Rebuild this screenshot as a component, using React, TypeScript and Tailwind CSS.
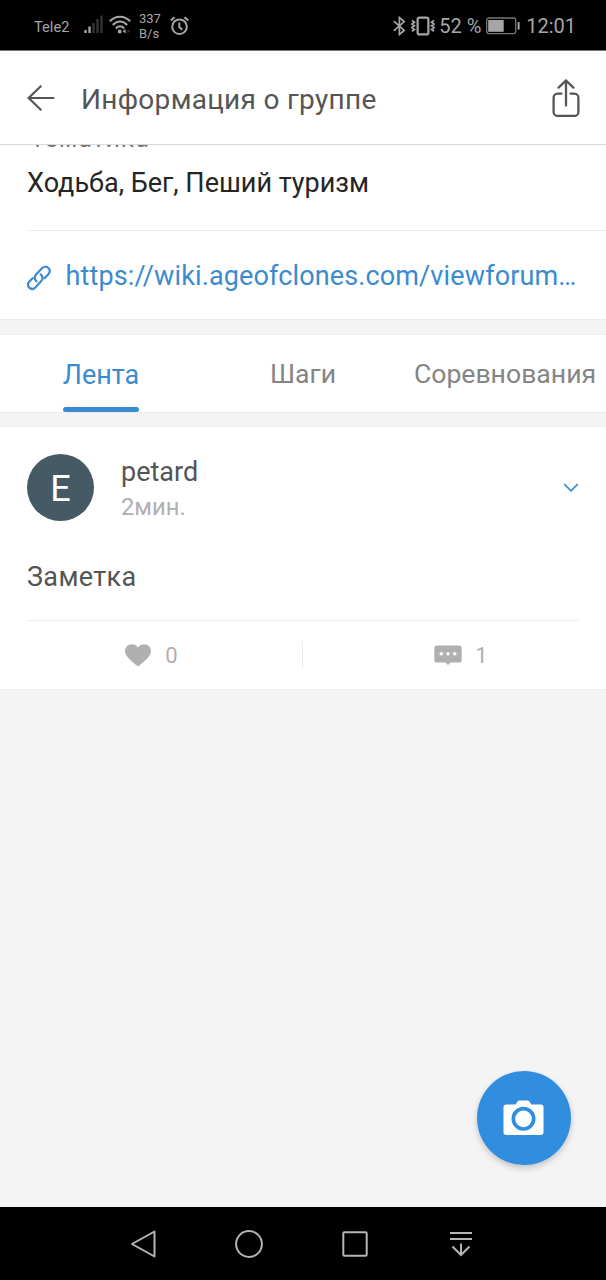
import type { ReactNode } from 'react';

const tabs = [
  { label: 'Лента', active: true },
  { label: 'Шаги', active: false },
  { label: 'Соревнования', active: false },
];

// Status bar icons
const SignalIcon = () => (
  <svg width="20" height="20" viewBox="0 0 20 20">
    <rect x="0.3" y="15" width="2.4" height="3" fill="#a6a6a6" />
    <rect x="4.3" y="11.5" width="2.4" height="6.5" fill="#a6a6a6" />
    <rect x="8.3" y="8" width="2.4" height="10" fill="#343434" />
    <rect x="12.3" y="4" width="2.4" height="14" fill="#343434" />
    <rect x="16.3" y="0.5" width="2.4" height="17.5" fill="#343434" />
  </svg>
);

const WifiIcon = () => (
  <svg width="22" height="20" viewBox="0 0 22 20" fill="none" stroke="#a6a6a6" strokeWidth="2">
    <path d="M0.8 6.2C6.5 0.1 15.5 0.1 21.2 6.2" />
    <path d="M3.8 10C8.2 5.3 13.8 5.3 18.2 10" />
    <path d="M6.8 13.5C9.5 10.6 12.5 10.6 15.2 13.5" />
    <path d="M9 14.8h3.4v3.4H9z" fill="#a6a6a6" stroke="none" />
    <path d="M16.6 14v4.4l-3-2.2z" fill="#a6a6a6" stroke="none" />
    <path d="M18.4 14v4.4l2.6-2.2z" fill="#343434" stroke="none" />
  </svg>
);

const AlarmIcon = () => (
  <svg width="19" height="20" viewBox="0 0 19 20" fill="none" stroke="#a6a6a6" strokeWidth="2">
    <circle cx="9.5" cy="10.7" r="7.3" />
    <path d="M9.3 6.4v4.6l3 2.8M0.8 4.6L4.6 1.2M18.2 4.6L14.4 1.2" />
  </svg>
);

const BluetoothIcon = () => (
  <svg width="13" height="20" viewBox="0 0 13 20" fill="none" stroke="#a6a6a6" strokeWidth="1.7">
    <path d="M0.8 5.2L11.2 14.4L6.4 18.4V1.6L11.2 5.6L0.8 14.8" />
  </svg>
);

const VibrateIcon = () => (
  <svg width="24" height="20" viewBox="0 0 24 20" fill="none" stroke="#a6a6a6">
    <rect x="6.6" y="1.6" width="10.8" height="16.8" rx="2" strokeWidth="2.2" />
    <path d="M1 4.4l2.4 1.8L1 8l2.4 1.8L1 11.6l2.4 1.8L1 15.2M23 4.4l-2.4 1.8L23 8l-2.4 1.8L23 11.6l-2.4 1.8L23 15.2" strokeWidth="1.8" />
  </svg>
);

const BatteryIcon = () => (
  <svg width="34" height="18" viewBox="0 0 34 18">
    <rect x="0.7" y="1" width="29" height="15.6" rx="2" fill="none" stroke="#777" strokeWidth="1.3" />
    <rect x="2.2" y="3" width="15.5" height="11.8" fill="#a6a6a6" />
    <rect x="31.6" y="5" width="2" height="7.6" fill="#a6a6a6" />
  </svg>
);

// Page icons
const BackIcon = () => (
  <svg width="28" height="28" viewBox="0 0 28 28" fill="none" stroke="#555" strokeWidth="2.2">
    <path d="M27.3 14H1.6M14.3 1.8L1.6 14l12.7 12.2" />
  </svg>
);

const ShareIcon = () => (
  <svg width="28" height="38" viewBox="0 0 28 38" fill="none" stroke="#555" strokeWidth="2.3" strokeLinecap="round">
    <path d="M9.5 14.6H5.6a4 4 0 0 0-4 4v14.3a4 4 0 0 0 4 4h16.8a4 4 0 0 0 4-4V18.6a4 4 0 0 0-4-4H18.5" />
    <path d="M14 26.5V1.6M6.6 8.6L14 1.5l7.4 7.1" />
  </svg>
);

const LinkIcon = () => (
  <svg width="24" height="26" viewBox="0 0 24 26" fill="none" stroke="#3b8bd0" strokeWidth="2.2" strokeLinecap="round">
    <path d="M9.5 16.3C7.3 14 7.4 11.3 9.3 9.3L15 3.3C17 1.3 19.6 1.2 21.4 3C23.2 4.8 23.1 7.3 21.2 9.4L17.5 13.2" />
    <path d="M13.7 9.3C15.9 11.5 16 14.3 14.1 16.3L8.6 22.2C6.6 24.2 4.1 24.4 2.3 22.6C0.6 20.9 0.7 18.3 2.6 16.3L5.6 13.2" />
  </svg>
);

const ChevronIcon = () => (
  <svg width="16" height="10" viewBox="0 0 16 10" fill="none" stroke="#3b8bd0" strokeWidth="1.7">
    <path d="M1.2 1.2L8 7.8l6.8-6.6" />
  </svg>
);

const HeartIcon = () => (
  <svg width="26" height="23" viewBox="0 0 26 23" fill="#b0b0b0">
    <path d="M13 22.6C11 20.9 6.4 17.3 3.4 14.1C1.2 11.7 0 9.5 0 7C0 3.2 3 0.3 6.8 0.3C9.3 0.3 11.7 1.5 13 3.6C14.3 1.5 16.7 0.3 19.2 0.3C23 0.3 26 3.2 26 7C26 9.5 24.8 11.7 22.6 14.1C19.6 17.3 15 20.9 13 22.6Z" />
  </svg>
);

const CommentIcon = () => (
  <svg width="28" height="20" viewBox="0 0 28 20">
    <path d="M2.8 0.5h22.4a2.5 2.5 0 0 1 2.5 2.5v12a2.5 2.5 0 0 1-2.5 2.5h-8.6L14 20l-2.6-2.5H2.8A2.5 2.5 0 0 1 0.3 15V3a2.5 2.5 0 0 1 2.5-2.5z" fill="#b0b0b0" />
    <g fill="#fff">
      <circle cx="7.3" cy="8.7" r="1.8" />
      <circle cx="14" cy="8.7" r="1.8" />
      <circle cx="20.7" cy="8.7" r="1.8" />
    </g>
  </svg>
);

const CameraIcon = () => (
  <svg width="41" height="36" viewBox="0 0 41 36">
    <path d="M3.2 4.5h9.4l2.2-3.2a2 2 0 0 1 1.6-0.8h8.2a2 2 0 0 1 1.6 0.8l2.2 3.2h9.4a2.7 2.7 0 0 1 2.7 2.7v25a2.7 2.7 0 0 1-2.7 2.7H3.2a2.7 2.7 0 0 1-2.7-2.7v-25a2.7 2.7 0 0 1 2.7-2.7z" fill="#fff" />
    <circle cx="20.5" cy="18.8" r="10.2" fill="none" stroke="#318edf" strokeWidth="3.7" />
  </svg>
);

const NavSlot = ({ children }: { children: ReactNode }) => (
  <button className="flex h-full w-[106px] items-center justify-center">{children}</button>
);

function StatusBar() {
  return (
    <div className="flex h-[51px] items-center border-b border-[#777] bg-black text-[#a6a6a6]">
      <span className="ml-[34px] w-[50px] pt-[3px] text-[14.7px] leading-5">Tele2</span>
      <SignalIcon />
      <div className="ml-[5px]"><WifiIcon /></div>
      <div className="ml-2 w-[31px] pt-0.5 text-[13px] leading-[15.5px]">
        <p>337</p>
        <p>B/s</p>
      </div>
      <div className="pt-px"><AlarmIcon /></div>
      <div className="ml-auto flex items-center pt-0.5">
        <BluetoothIcon />
        <div className="ml-[5px]"><VibrateIcon /></div>
        <span className="ml-1 w-[47px] text-[20px] leading-6">52 %</span>
        <BatteryIcon />
        <span className="mr-[30px] ml-1.5 text-[20px] leading-6">12:01</span>
      </div>
    </div>
  );
}

export default function App() {
  return (
    <div className="relative flex h-[1280px] w-[606px] flex-col overflow-hidden bg-[#f4f4f4] font-['Roboto',sans-serif] whitespace-nowrap">
      <StatusBar />

      <header className="flex h-[94px] items-center border-b border-[#d8d8d8] bg-white pr-[26px] pl-[27px]">
        <BackIcon />
        <h1 className="mt-1 ml-[26px] text-[28px] leading-8 tracking-[0.3px] text-[#555]">Информация о группе</h1>
        <div className="ml-auto"><ShareIcon /></div>
      </header>

      {/* Group info, scrolled under the header */}
      <section className="h-[175px] overflow-hidden border-b border-[#ececec] bg-white pl-[27px]">
        <p className="-mt-[22px] h-[45px] pl-[3px] text-[25px] leading-[32px] tracking-[0.9px] text-[#777]">Тематика</p>
        <p className="h-[62px] text-[27px] leading-[30px] text-[#252525]">Ходьба, Бег, Пеший туризм</p>
        <div className="flex h-[89px] items-center border-t border-[#e9e9e9] text-[#3b8bd0]">
          <div className="mt-1.5"><LinkIcon /></div>
          <a className="mt-0.5 ml-[14.5px] text-[27px] leading-8 tracking-[0.13px]">https://wiki.ageofclones.com/viewforum…</a>
        </div>
      </section>

      <nav className="mt-[14px] flex h-[79px] border-y border-[#ececec] bg-white">
        {tabs.map(tab => (
          <div key={tab.label} className="flex w-[202px] shrink-0 justify-center">
            <div className={`relative leading-8 ${tab.active ? 'pt-6 text-[27px] text-[#3b8bd0]' : 'pt-[23px] text-[26.6px] text-[#858585]'}`}>
              {tab.label}
              {tab.active && <span className="absolute inset-x-0 bottom-0 h-[5px] rounded-full bg-[#3b8bd0]" />}
            </div>
          </div>
        ))}
      </nav>

      <article className="mt-[13px] h-[264px] border-y border-[#ececec] bg-white px-[27px]">
        <div className="flex h-[121px] items-center">
          <div className="flex size-[67px] items-center justify-center rounded-full bg-[#455a64] pt-0.5 text-[36px] leading-none text-white">E</div>
          <div className="mt-1 ml-[27px]">
            <p className="text-[27px] leading-[35px] text-[#555]">petard</p>
            <p className="text-[23.8px] leading-[34px] text-[#b0b0b0]">2мин.</p>
          </div>
          <div className="ml-auto"><ChevronIcon /></div>
        </div>
        <p className="h-[72px] pt-[13px] text-[27px] leading-8 tracking-[0.34px] text-[#555]">Заметка</p>
        <div className="flex h-[69px] items-center border-t border-[#ececec] text-[22px] text-[#b0b0b0]">
          <div className="flex w-[275px] items-center justify-center gap-[14px] pr-[26px]">
            <HeartIcon />
            <span>0</span>
          </div>
          <div className="h-7 w-px bg-[#ececec]" />
          <div className="flex w-[276px] items-center justify-center gap-[13px] pl-[40px]">
            <CommentIcon />
            <span>1</span>
          </div>
        </div>
      </article>

      <button className="absolute top-[1071px] left-[477px] flex size-[94px] items-center justify-center rounded-full bg-[#318edf] pr-px shadow-[0_3px_6px_rgba(0,0,0,0.2)]">
        <CameraIcon />
      </button>

      <div className="mt-auto flex h-[73px] justify-center bg-black pr-[3px]">
        <NavSlot>
          <svg width="28" height="30" viewBox="0 0 28 30" fill="none" stroke="#b5b5b5" strokeWidth="2" strokeLinejoin="round">
            <path d="M25.5 2.5v25L3 15z" />
          </svg>
        </NavSlot>
        <NavSlot>
          <svg width="28" height="28" viewBox="0 0 28 28" fill="none" stroke="#b5b5b5" strokeWidth="2">
            <circle cx="14" cy="14" r="12.9" />
          </svg>
        </NavSlot>
        <NavSlot>
          <svg width="26" height="26" viewBox="0 0 26 26" fill="none" stroke="#b5b5b5" strokeWidth="2">
            <rect x="1.3" y="1.3" width="23.4" height="23.4" rx="1" />
          </svg>
        </NavSlot>
        <NavSlot>
          <svg width="22" height="26" viewBox="0 0 22 26" fill="none" stroke="#b5b5b5" strokeWidth="2">
            <path d="M0 2h22M0 8h22M11 12.5V24M2.5 15.5L11 24l8.5-8.5" />
          </svg>
        </NavSlot>
      </div>
    </div>
  );
}
